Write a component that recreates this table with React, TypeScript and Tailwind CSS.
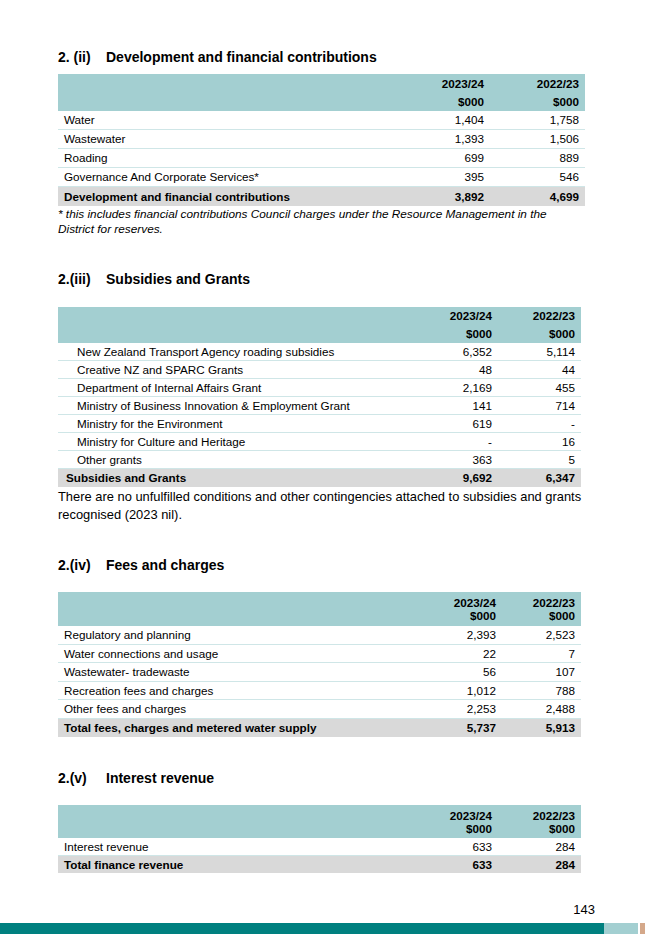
import type { ReactNode } from "react";

type Row = {
  label: string;
  a: string;
  b: string;
};

type TableProps = {
  rows: Row[];
  total: Row;
  indent?: boolean;
  tightHeader?: boolean;
  rowH: string;
  headerH: string;
  cols: string;
  width: string;
};

function Heading({ num, title }: { num: string; title: string }) {
  return (
    <h2 className="flex text-[14px] font-bold leading-5 text-black">
      <span className="w-[48px] shrink-0">{num}</span>
      <span>{title}</span>
    </h2>
  );
}

function DataTable({ rows, total, indent, tightHeader, rowH, headerH, cols, width }: TableProps) {
  const grid = "grid " + cols;
  const stack = tightHeader ? "leading-[13px]" : "gap-[4px] leading-[14px]";
  return (
    <div className={"text-[11.7px] text-black " + width}>
      <div className={grid + " bg-[#a3cfd1] font-bold " + headerH}>
        <div />
        <div className={"flex flex-col items-end justify-center " + stack}>
          <span>2023/24</span>
          <span>$000</span>
        </div>
        <div className={"flex flex-col items-end justify-center pr-[6px] " + stack}>
          <span>2022/23</span>
          <span>$000</span>
        </div>
      </div>
      {rows.map((r) => (
        <div key={r.label} className={grid + " items-center border-b border-[#cfe6e7] " + rowH}>
          <div className={indent ? "pl-[19px]" : "pl-[6px]"}>{r.label}</div>
          <div className="text-right">{r.a}</div>
          <div className="pr-[6px] text-right">{r.b}</div>
        </div>
      ))}
      <div className={grid + " items-center bg-[#d9d9d9] font-bold " + rowH}>
        <div className={indent ? "pl-[8px]" : "pl-[6px]"}>{total.label}</div>
        <div className="text-right">{total.a}</div>
        <div className="pr-[6px] text-right">{total.b}</div>
      </div>
    </div>
  );
}

function Section({ children, className }: { children: ReactNode; className?: string }) {
  return <section className={className}>{children}</section>;
}

export default function App() {
  return (
    <div
      className="flex h-[934px] w-[645px] flex-col bg-white"
      style={{ fontFamily: '"Liberation Sans", Arial, sans-serif' }}
    >
      <main className="flex-1 pl-[58px] pr-[58px]">
        <Section className="pt-[47px]">
          <Heading num="2. (ii)" title="Development and financial contributions" />
          <div className="mt-[7px]">
            <DataTable
              width="w-[527px]"
              cols="grid-cols-[1fr_90px_101px]"
              headerH="h-[37px]"
              rowH="h-[19px]"
              rows={[
                { label: "Water", a: "1,404", b: "1,758" },
                { label: "Wastewater", a: "1,393", b: "1,506" },
                { label: "Roading", a: "699", b: "889" },
                { label: "Governance And Corporate Services*", a: "395", b: "546" },
              ]}
              total={{ label: "Development and financial contributions", a: "3,892", b: "4,699" }}
            />
          </div>
          <p className="mt-[1px] w-[500px] text-[11.8px] italic leading-[15px] text-black">
            * this includes financial contributions Council charges under the Resource Management in the
            District for reserves.
          </p>
        </Section>

        <Section className="pt-[32px]">
          <Heading num="2.(iii)" title="Subsidies and Grants" />
          <div className="mt-[18px]">
            <DataTable
              indent
              width="w-[523px]"
              cols="grid-cols-[1fr_90px_89px]"
              headerH="h-[36px]"
              rowH="h-[18px]"
              rows={[
                { label: "New Zealand Transport Agency roading subsidies", a: "6,352", b: "5,114" },
                { label: "Creative NZ and SPARC Grants", a: "48", b: "44" },
                { label: "Department of Internal Affairs Grant", a: "2,169", b: "455" },
                { label: "Ministry of Business Innovation & Employment Grant", a: "141", b: "714" },
                { label: "Ministry for the Environment", a: "619", b: "-" },
                { label: "Ministry for Culture and Heritage", a: "-", b: "16" },
                { label: "Other grants", a: "363", b: "5" },
              ]}
              total={{ label: "Subsidies and Grants", a: "9,692", b: "6,347" }}
            />
          </div>
          <p className="mt-[1px] w-[526px] text-[12.9px] leading-[18px] text-black">
            There are no unfulfilled conditions and other contingencies attached to subsidies and grants
            recognised (2023 nil).
          </p>
        </Section>

        <Section className="pt-[31px]">
          <Heading num="2.(iv)" title="Fees and charges" />
          <div className="mt-[17px]">
            <DataTable
              tightHeader
              width="w-[523px]"
              cols="grid-cols-[1fr_90px_85px]"
              headerH="h-[34px]"
              rowH="h-[18.5px]"
              rows={[
                { label: "Regulatory and planning", a: "2,393", b: "2,523" },
                { label: "Water connections and usage", a: "22", b: "7" },
                { label: "Wastewater- tradewaste", a: "56", b: "107" },
                { label: "Recreation fees and charges", a: "1,012", b: "788" },
                { label: "Other fees and charges", a: "2,253", b: "2,488" },
              ]}
              total={{ label: "Total fees, charges and metered water supply", a: "5,737", b: "5,913" }}
            />
          </div>
        </Section>

        <Section className="pt-[31px]">
          <Heading num="2.(v)" title="Interest revenue" />
          <div className="mt-[17px]">
            <DataTable
              tightHeader
              width="w-[523px]"
              cols="grid-cols-[1fr_90px_89px]"
              headerH="h-[33px]"
              rowH="h-[17.5px]"
              rows={[{ label: "Interest revenue", a: "633", b: "284" }]}
              total={{ label: "Total finance revenue", a: "633", b: "284" }}
            />
          </div>
        </Section>
      </main>

      <div className="flex justify-end pr-[50px] pb-[5px] text-[13px] leading-[16px] text-black">143</div>
      <div className="flex h-[11px]">
        <div className="flex-1 bg-[#00807f]" />
        <div className="w-[34px] bg-[#a3cfd1]" />
        <div className="w-[2px] bg-white" />
        <div className="w-[5px] bg-[#d4a88a]" />
      </div>
    </div>
  );
}
